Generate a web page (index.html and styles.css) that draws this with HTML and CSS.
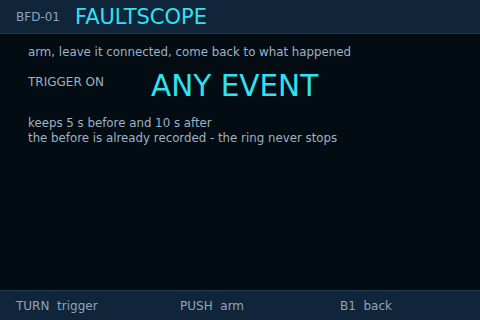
FILE: index.html
```html
<!DOCTYPE html>
<html lang="en">
<head>
  <meta charset="UTF-8">
  <title>FaultScope</title>
  <link rel="stylesheet" href="styles.css">
</head>
<body>
  <div class="screen">
    <div class="header">
      <span class="unit">BFD-01</span>
      <span class="title">FAULTSCOPE</span>
    </div>

    <div class="content">
      <p class="intro">arm, leave it connected, come back to what happened</p>
      <div class="trigger">
        <span class="label">TRIGGER ON</span>
        <span class="value">ANY EVENT</span>
      </div>
      <p class="note">keeps 5 s before and 10 s after<br>the before is already recorded - the ring never stops</p>
    </div>

    <div class="footer">
      <span class="key">TURN&nbsp; trigger</span>
      <span class="key">PUSH&nbsp; arm</span>
      <span class="key">B1&nbsp; back</span>
    </div>
  </div>
</body>
</html>
```

FILE: styles.css
```css
body {
  margin: 0;
  background: #020c12;
  font-family: "DejaVu Sans", sans-serif;
  color: #9fb2c6;
}

.screen {
  width: 480px;
  height: 320px;
  display: flex;
  flex-direction: column;
  overflow: hidden;
}

.header {
  height: 33px;
  background: #10243a;
  border-bottom: 1px solid #223a4e;
  display: flex;
  align-items: center;
  padding-left: 16px;
  gap: 15px;
}

.unit {
  font-size: 12px;
  color: #8ea5bd;
}

.title {
  font-size: 21px;
  color: #2fe2f2;
}

.content {
  flex: 1;
  padding: 11px 28px 0;
}

.intro {
  margin: 0;
  font-size: 11.8px;
  line-height: 15px;
}

.trigger {
  display: flex;
  align-items: center;
  height: 38px;
  margin-top: 7px;
}

.label {
  font-size: 12px;
  width: 123px;
  margin-top: -8px;
}

.value {
  font-size: 29.5px;
  color: #2fe2f2;
}

.note {
  margin: 11px 0 0;
  font-size: 11.8px;
  line-height: 15px;
}

.footer {
  height: 29px;
  background: #10243a;
  border-top: 1px solid #223a4e;
  display: grid;
  grid-template-columns: 164px 160px auto;
  align-items: center;
  padding-left: 16px;
}

.key {
  font-size: 12px;
  color: #8ea5bd;
}
```
